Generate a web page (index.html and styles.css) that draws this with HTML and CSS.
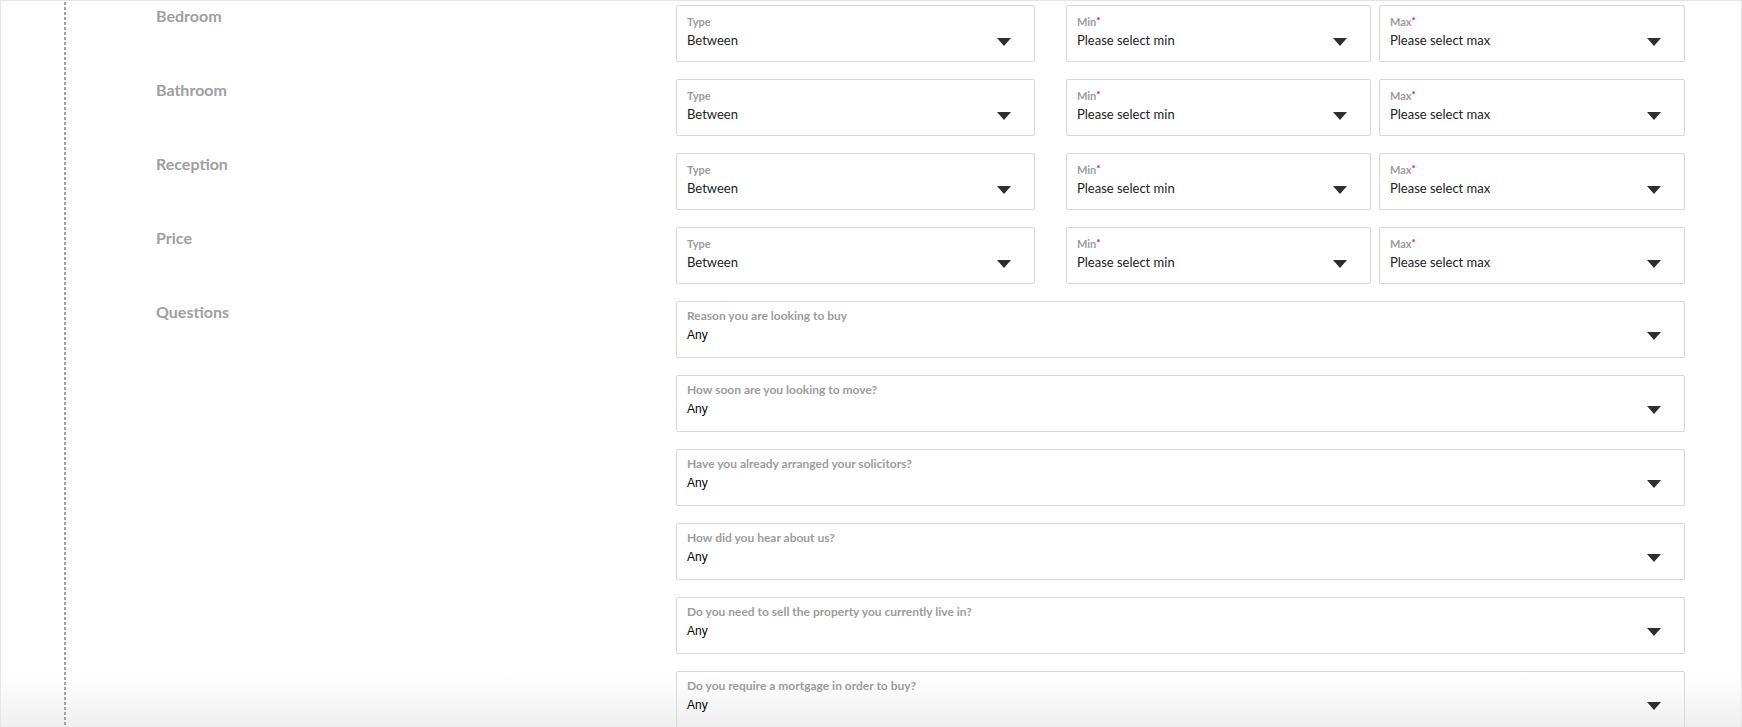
FILE: index.html
```html
<!DOCTYPE html>
<html lang="en">
<head>
    <meta charset="UTF-8">
    <meta name="viewport" content="width=device-width, initial-scale=1.0">
    <title>Requirements</title>
    <link rel="stylesheet" href="styles.css">
</head>
<body>
    <div class="page">
        <div class="track"></div>

        <div class="form">
            <div class="row">
                <div class="row-label">Bedroom</div>
                <div class="range">
                    <div class="field field-type">
                        <div class="field-text">
                            <div class="field-label">Type</div>
                            <div class="field-value">Between</div>
                        </div>
                        <svg class="caret" viewBox="0 0 14 8"><polygon points="0,0 14,0 7,8"/></svg>
                    </div>
                    <div class="field field-min">
                        <div class="field-text">
                            <div class="field-label">Min<span class="req">*</span></div>
                            <div class="field-value">Please select min</div>
                        </div>
                        <svg class="caret" viewBox="0 0 14 8"><polygon points="0,0 14,0 7,8"/></svg>
                    </div>
                    <div class="field field-max">
                        <div class="field-text">
                            <div class="field-label">Max<span class="req">*</span></div>
                            <div class="field-value">Please select max</div>
                        </div>
                        <svg class="caret" viewBox="0 0 14 8"><polygon points="0,0 14,0 7,8"/></svg>
                    </div>
                </div>
            </div>

            <div class="row">
                <div class="row-label">Bathroom</div>
                <div class="range">
                    <div class="field field-type">
                        <div class="field-text">
                            <div class="field-label">Type</div>
                            <div class="field-value">Between</div>
                        </div>
                        <svg class="caret" viewBox="0 0 14 8"><polygon points="0,0 14,0 7,8"/></svg>
                    </div>
                    <div class="field field-min">
                        <div class="field-text">
                            <div class="field-label">Min<span class="req">*</span></div>
                            <div class="field-value">Please select min</div>
                        </div>
                        <svg class="caret" viewBox="0 0 14 8"><polygon points="0,0 14,0 7,8"/></svg>
                    </div>
                    <div class="field field-max">
                        <div class="field-text">
                            <div class="field-label">Max<span class="req">*</span></div>
                            <div class="field-value">Please select max</div>
                        </div>
                        <svg class="caret" viewBox="0 0 14 8"><polygon points="0,0 14,0 7,8"/></svg>
                    </div>
                </div>
            </div>

            <div class="row">
                <div class="row-label">Reception</div>
                <div class="range">
                    <div class="field field-type">
                        <div class="field-text">
                            <div class="field-label">Type</div>
                            <div class="field-value">Between</div>
                        </div>
                        <svg class="caret" viewBox="0 0 14 8"><polygon points="0,0 14,0 7,8"/></svg>
                    </div>
                    <div class="field field-min">
                        <div class="field-text">
                            <div class="field-label">Min<span class="req">*</span></div>
                            <div class="field-value">Please select min</div>
                        </div>
                        <svg class="caret" viewBox="0 0 14 8"><polygon points="0,0 14,0 7,8"/></svg>
                    </div>
                    <div class="field field-max">
                        <div class="field-text">
                            <div class="field-label">Max<span class="req">*</span></div>
                            <div class="field-value">Please select max</div>
                        </div>
                        <svg class="caret" viewBox="0 0 14 8"><polygon points="0,0 14,0 7,8"/></svg>
                    </div>
                </div>
            </div>

            <div class="row">
                <div class="row-label">Price</div>
                <div class="range">
                    <div class="field field-type">
                        <div class="field-text">
                            <div class="field-label">Type</div>
                            <div class="field-value">Between</div>
                        </div>
                        <svg class="caret" viewBox="0 0 14 8"><polygon points="0,0 14,0 7,8"/></svg>
                    </div>
                    <div class="field field-min">
                        <div class="field-text">
                            <div class="field-label">Min<span class="req">*</span></div>
                            <div class="field-value">Please select min</div>
                        </div>
                        <svg class="caret" viewBox="0 0 14 8"><polygon points="0,0 14,0 7,8"/></svg>
                    </div>
                    <div class="field field-max">
                        <div class="field-text">
                            <div class="field-label">Max<span class="req">*</span></div>
                            <div class="field-value">Please select max</div>
                        </div>
                        <svg class="caret" viewBox="0 0 14 8"><polygon points="0,0 14,0 7,8"/></svg>
                    </div>
                </div>
            </div>

            <div class="row">
                <div class="row-label">Questions</div>
                <div class="questions">
                    <div class="field question">
                        <div class="field-text">
                            <div class="field-label">Reason you are looking to buy</div>
                            <div class="field-value">Any</div>
                        </div>
                        <svg class="caret" viewBox="0 0 14 8"><polygon points="0,0 14,0 7,8"/></svg>
                    </div>
                    <div class="field question">
                        <div class="field-text">
                            <div class="field-label">How soon are you looking to move?</div>
                            <div class="field-value">Any</div>
                        </div>
                        <svg class="caret" viewBox="0 0 14 8"><polygon points="0,0 14,0 7,8"/></svg>
                    </div>
                    <div class="field question">
                        <div class="field-text">
                            <div class="field-label">Have you already arranged your solicitors?</div>
                            <div class="field-value">Any</div>
                        </div>
                        <svg class="caret" viewBox="0 0 14 8"><polygon points="0,0 14,0 7,8"/></svg>
                    </div>
                    <div class="field question">
                        <div class="field-text">
                            <div class="field-label">How did you hear about us?</div>
                            <div class="field-value">Any</div>
                        </div>
                        <svg class="caret" viewBox="0 0 14 8"><polygon points="0,0 14,0 7,8"/></svg>
                    </div>
                    <div class="field question">
                        <div class="field-text">
                            <div class="field-label">Do you need to sell the property you currently live in?</div>
                            <div class="field-value">Any</div>
                        </div>
                        <svg class="caret" viewBox="0 0 14 8"><polygon points="0,0 14,0 7,8"/></svg>
                    </div>
                    <div class="field question">
                        <div class="field-text">
                            <div class="field-label">Do you require a mortgage in order to buy?</div>
                            <div class="field-value">Any</div>
                        </div>
                        <svg class="caret" viewBox="0 0 14 8"><polygon points="0,0 14,0 7,8"/></svg>
                    </div>
                </div>
            </div>
        </div>
    </div>
</body>
</html>
```

FILE: styles.css
```css
body {
    margin: 0;
    background: #ffffff;
    font-family: Lato, 'Liberation Sans', sans-serif;
    overflow: hidden;
}

/* grey fade at the bottom sits behind the fields, not over them */
.page {
    display: flex;
    height: 100vh;
    box-sizing: border-box;
    border: 1px solid #e6e6e6;
    border-bottom: none;
    overflow: hidden;
    background: linear-gradient(to bottom, #ffffff calc(100% - 52px), #efefef 100%);
}

.track {
    flex: none;
    width: 2px;
    margin-left: 63px;
    margin-top: 1px;
    background: repeating-linear-gradient(to bottom, #a2a2a2 0, #a2a2a2 3px, transparent 3px, transparent 5px);
}

.form {
    padding: 4px 0 0 90px;
    display: flex;
    flex-direction: column;
    gap: 17px;
}

.row {
    display: flex;
}

.row-label {
    width: 520px;
    flex: none;
    padding-top: 1px;
    font-size: 16px;
    line-height: 20px;
    font-weight: 700;
    color: #a0a0a0;
}

.range {
    display: flex;
    gap: 8px;
}

.questions {
    display: flex;
    flex-direction: column;
    gap: 17px;
    width: 1009px;
}

.field {
    display: flex;
    height: 57px;
    box-sizing: border-box;
    border: 1px solid #d8d8d8;
    border-radius: 2px;
    padding: 9px 0 0 10px;
}

.field-type {
    width: 359px;
    margin-right: 23px;
}

.field-min {
    width: 305px;
}

.field-max {
    width: 306px;
}

.field-text {
    flex: 1;
}

.field-label {
    font-size: 11px;
    line-height: 13px;
    font-weight: 700;
    color: #9c9c9c;
}

.req {
    color: #e4007c;
    font-size: 10px;
    vertical-align: 2px;
    line-height: 0;
}

.field-value {
    margin-top: 4px;
    font-size: 13px;
    line-height: 17px;
    font-weight: 400;
    color: #222;
}

.caret {
    flex: none;
    width: 14px;
    height: 8px;
    margin: 23px 23px 0 0;
    fill: #2b2f2f;
}

.question {
    padding-top: 7px;
}

.question .field-label {
    font-size: 12px;
    line-height: 14px;
}

.question .field-value {
    margin-top: 5px;
    font-family: 'Liberation Sans', Arial, sans-serif;
    font-size: 12px;
    line-height: 14px;
    color: #000;
}

.question .caret {
    margin-top: 23px;
}
```
